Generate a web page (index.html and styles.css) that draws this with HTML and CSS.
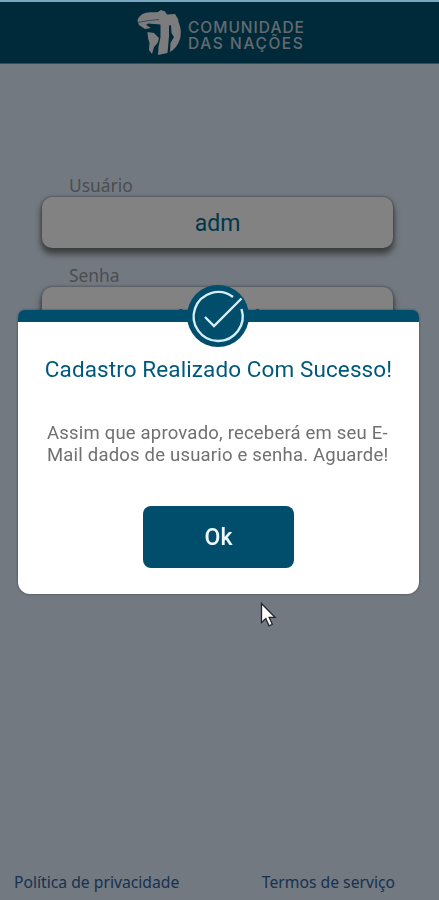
FILE: index.html
```html
<!DOCTYPE html>
<html lang="pt-BR">
<head>
  <meta charset="UTF-8" />
  <meta name="viewport" content="width=device-width, initial-scale=1.0" />
  <title>Comunidade das Nações</title>
  <link rel="stylesheet" href="styles.css">
</head>
<body>
  <div class="page">
    <header class="header">
      <svg class="logo-globe" viewBox="0 0 44 46" width="44" height="46">
        <path d="M0.5 11 C1 7 5 3 11 2.5 C15 1.5 18 3 21 2 L24 0 L28 1.5 L30 4.5 L38 4 L41 9 L42 14 L32 15.5 L32 26 L30.5 43 L21 45 L21.5 37 L23.5 27 L23.5 14.5 L11 13.5 L9 15 L14 18 L8 19 L2 15 Z" />
        <path d="M10.5 22 L17 23 L22 28 L20.5 33 L17 37 L15 44 L12 40 L12.5 33 L11 28 Z" />
        <path d="M34 15 L42 13 Q45 21 43 29 Q40 38 33 42 L33.5 33 L37 27 L34.5 23 Z" />
        <path class="logo-line" d="M0.5 12.5 L12 10.5 L22 9.5" />
      </svg>
      <div class="logo-text">
        <span class="logo-top">COMUNIDADE</span>
        <span class="logo-bottom">DAS NAÇÕES</span>
      </div>
    </header>

    <form class="login-form">
      <label for="usuario">Usuário</label>
      <input type="text" id="usuario" value="adm" />

      <label for="senha">Senha</label>
      <input type="password" id="senha" value="123456" />
    </form>

    <footer class="footer">
      <a href="#">Política de privacidade</a>
      <a href="#">Termos de serviço</a>
    </footer>
  </div>

  <div class="overlay">
    <div class="modal">
      <svg class="modal-icon" viewBox="0 0 62 62" width="62" height="62">
        <circle class="icon-bg" cx="31" cy="31" r="31" />
        <path class="icon-ring" d="M46 12 A24.5 24.5 0 1 0 54.5 24" />
        <path class="icon-check" d="M18 32 L27 41 L54.5 13.5" />
      </svg>
      <h1>Cadastro Realizado Com Sucesso!</h1>
      <p>Assim que aprovado, receberá em seu E-<br>Mail dados de usuario e senha. Aguarde!</p>
      <button type="button">Ok</button>
    </div>
  </div>

  <svg class="cursor" viewBox="0 0 18 26" width="18" height="26">
    <path d="M1.5 1.5 V20.5 L5.8 16.6 L9 23.8 L12.3 22.3 L9.2 15.4 H15 Z" />
  </svg>
</body>
</html>
```

FILE: styles.css
```css
* {
  box-sizing: border-box;
}

body {
  margin: 0;
  font-family: Roboto, Arial, sans-serif;
  overflow: hidden;
}

.page {
  display: flex;
  flex-direction: column;
  height: 900px;
  background-color: #e1edfd;
}

.header {
  display: flex;
  align-items: flex-start;
  height: 64px;
  padding: 8px 0 0 137px;
  background-color: #005472;
  border-top: 2px solid #78a8c0;
  border-bottom: 1px solid #709aa8;
}

.logo-globe {
  fill: #f4f4f8;
}

.logo-line {
  fill: none;
  stroke: #005472;
  stroke-width: 0.6;
}

.logo-text {
  display: flex;
  flex-direction: column;
  margin: 10px 0 0 7px;
  font-family: Inter, Arial, sans-serif;
  font-size: 15.5px;
  font-weight: 500;
  line-height: 16px;
  color: #c4d0da;
  white-space: nowrap;
}

.logo-top {
  letter-spacing: 1px;
}

.logo-bottom {
  letter-spacing: 1.6px;
}

.login-form {
  flex: 1;
  padding: 110px 46px 0 42px;
}

.login-form label {
  display: block;
  height: 23px;
  padding-left: 27px;
  font-family: "Noto Sans", Arial, sans-serif;
  font-size: 17.4px;
  line-height: 23px;
  color: #93979e;
}

.login-form input {
  display: block;
  width: 100%;
  height: 51px;
  margin-bottom: 16px;
  padding: 2px 0 0;
  border: 0;
  border-radius: 10px;
  background-color: #fff;
  box-shadow: 0 5px 6px 1px #747a7a, 0 0 3px #747a7a;
  font-family: Roboto, Arial, sans-serif;
  font-size: 23px;
  color: #006c92;
  text-align: center;
}

#senha {
  padding: 2px 0 0 3px;
  font-family: "DejaVu Sans", sans-serif;
  font-size: 26px;
}

.footer {
  display: flex;
  justify-content: space-between;
  height: 36px;
  padding: 8px 44px 0 14px;
  font-family: "Noto Sans", Arial, sans-serif;
  font-size: 15.7px;
  line-height: 20px;
}

.footer a {
  color: #30629c;
  text-decoration: none;
}

.overlay {
  position: fixed;
  inset: 2px 0 0;
  padding: 308px 20px 0 18px;
  background-color: rgba(0, 0, 0, 0.49);
}

.modal {
  position: relative;
  display: flex;
  flex-direction: column;
  align-items: center;
  height: 284px;
  padding-top: 33px;
  border-top: 12px solid #004e6c;
  border-radius: 7px 7px 12px 12px;
  background-color: #fff;
  box-shadow: 0 0 3px rgba(0, 0, 0, 0.4);
}

.modal-icon {
  position: absolute;
  top: -37px;
  left: 169px;
}

.icon-bg {
  fill: #004e6c;
}

.icon-ring,
.icon-check {
  fill: none;
  stroke: #d5edf8;
  stroke-width: 2.4;
}

.modal h1 {
  margin: 0;
  font-size: 22.5px;
  font-weight: 400;
  line-height: 28px;
  letter-spacing: 0.1px;
  color: #00587c;
  white-space: nowrap;
}

.modal p {
  width: 343px;
  margin: 39px 0 0;
  font-size: 18.5px;
  line-height: 22px;
  letter-spacing: 0.2px;
  color: #707070;
  white-space: nowrap;
}

.modal button {
  width: 151px;
  height: 62px;
  margin-top: 40px;
  border: 0;
  border-radius: 8px;
  background-color: #004e6c;
  font-family: inherit;
  font-size: 23px;
  font-weight: 500;
  color: #eefaff;
}

/* mouse pointer over everything */
.cursor {
  position: absolute;
  top: 602px;
  left: 260px;
  fill: #fff;
  stroke: #22252c;
  stroke-width: 1.3;
}
```
